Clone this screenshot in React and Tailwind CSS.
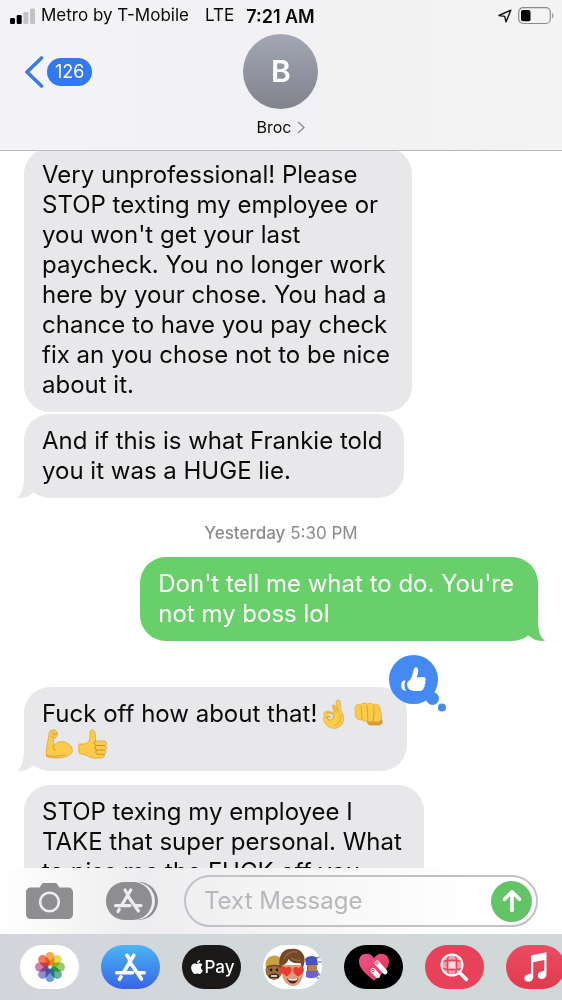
import { useState } from 'react';
import { FaApple } from 'react-icons/fa';

const CellSignal = () => (
  <svg width="25" height="16" viewBox="0 0 25 16" aria-hidden="true">
    <rect x="0" y="10" width="5" height="6" rx="1.3" fill="#000" />
    <rect x="6.700" y="7" width="5" height="9" rx="1.300" fill="#000" />
    <rect x="13.4" y="4" width="5" height="12" rx="1.3" fill="#c3c3c6" />
    <rect x="20" y="0.500" width="5" height="15.500" rx="1.3" fill="#c3c3c6" />
  </svg>
);

const LocationArrow = () => (
  <svg width="14" height="14" viewBox="0 0 14 14" aria-hidden="true">
    <path d="M12.800 1.200 1 6.500 6.700 7.400 8 12.900Z" fill="none" stroke="#111" strokeWidth="1.4" strokeLinejoin="round" />
  </svg>
);

const Battery = () => (
  <svg width="36" height="18" viewBox="0 0 36 18" aria-hidden="true">
    <rect x="0.700" y="0.700" width="31.6" height="15.800" rx="4.500" fill="none" stroke="#8b8b8e" strokeWidth="1.2" />
    <rect x="3" y="3" width="9.500" height="11.200" rx="2" fill="#000" />
    <path d="M34 6v5.500c1.800-.6 1.800-4.900 0-5.500Z" fill="#98989b" />
  </svg>
);

const OkHand = () => (
  <svg className="mx-0.5" width="30" height="30" viewBox="0 0 30 30" role="img" aria-label="OK hand">
    <path
      d="M18.200 1.300c1.700-1 3.200.4 3.200 2.200l.3 7.200c.6 2.600 2.700 4.500 2.900 7.700.4 6.600-4 11.200-9.700 10.900-5.400-.2-8.700-3.500-10.300-8.700-.6-2 .1-2.900 1.300-3.500-.9-1.200-1.500-2.500-.5-3.700 1.200-1.400 4.200-1.600 6.800-.5l3.300 1.800-2.100-6.500c-.7-2.300 1.500-3.500 2.600-1.600l2.600 4.900-1.400-6.900c-.2-1.500-.1-2.500 1-3.300Z"
      fill="#fbcb49" stroke="#d9a033" strokeWidth=".6"
    />
    <path d="M7.500 14c2.600-.6 5.800.3 7.100 2.400.6 1.900-1.300 4.500-3.600 4.800-1.900-.3-2.700-2-3.800-3.300 1.700.5 3.700.6 5-.4" fill="#e8e7ea" stroke="#c08a2c" strokeWidth=".8" />
    <path d="m14.700 7.500 2.500 6.300M18.200 8l1.300 5.500M21.500 16c1 4-1 9-5.500 10.500" fill="none" stroke="#dfa43a" strokeWidth=".8" strokeLinecap="round" />
  </svg>
);

const Fist = () => (
  <svg className="mx-0.5" width="30" height="30" viewBox="0 0 30 30" role="img" aria-label="Oncoming fist">
    <path d="M14 20h14.500c1.300 2.500.7 5.300-1.500 6H17c-2 0-3.200-2.600-3-6Z" fill="#dd9a35" stroke="#c2832e" strokeWidth=".6" />
    <path
      d="M2 8.500c.5-2.600 3.500-3.600 5.500-2.400 1.700-2.500 5-2.500 6.500-.9 1.800-1.500 5-1.400 6.400.4 2.400-1 5.600-.3 6.300 2.300l1.900 8.500c.7 3.600-.9 6-3.700 6.500-2 .6-4-.2-5-1.500-1.500 1.600-4.200 1.600-5.700.1-1.600 1.200-4 .9-5.200-.8-2.300.7-5-.3-6-2.500-.9-2.500-.9-6-1-9.700Z"
      fill="#fcca48" stroke="#dca036" strokeWidth=".6"
    />
    <path d="M8 7.500c1 3.800.2 8.500 1 12M14 7c1.300 4 .2 9.500.8 13M20.600 7.500c1.300 4 .1 9-.2 13" fill="none" stroke="#d7972f" strokeWidth=".9" strokeLinecap="round" />
  </svg>
);

const Biceps = () => (
  <svg className="mx-0.5" width="30" height="30" viewBox="0 0 30 30" role="img" aria-label="Flexed biceps">
    <path
      d="M6.500 1.500c2.300-1.100 5.500-.6 6.500 1.300.7 1.900.4 4.800-1.300 5.900-.9.7-1.900.4-2.500-.1.200 2.700.8 5.400.4 8.500 3-4.600 8.500-6 13.500-3.100 3.800 2.100 5.800 5.700 5.200 8.700-1.500 3.700-8 6.500-16 6.300-4.800-.1-8.800-.4-9.800-1.700-.9-5.500.9-12.300 1.900-18.300.5-3.500.9-6.600 2.100-7.500Z"
      fill="#fbcc4b" stroke="#d99c30" strokeWidth=".7"
    />
    <path d="M9.800 8.500 7.400 7M8 3.500l2.400 1.700M12.500 4.500 9.700 6M9.500 17.200c-1.300 2.500.5 4.300 2.500 4M3 26.500c5 1.300 12 1 18-.7" fill="none" stroke="#d6972d" strokeWidth=".9" strokeLinecap="round" />
  </svg>
);

const ThumbsUp = () => (
  <svg className="mx-0.5" width="30" height="30" viewBox="0 0 30 30" role="img" aria-label="Thumbs up">
    <path
      d="M11 12.200c1.500-3 .9-6.700 1.200-9.600.5-2.200 3.500-2.300 4.400-.1 1 2.700 1.300 6 .9 9.500l8.500-.1c3 .1 3.400 3.800 1.300 4.600 1.800 1 1.500 4-.1 4.700 1.200 1.200.7 3.700-1 4.200.6 2.300-1 3.700-3.200 3.700-6.500.4-10.500-.2-14-2.300-3-1.600-6.200-1.500-7.500-2.300-1.200-3.200-1-6.300-.4-9.600 3.300.4 7.500.4 9.900-2.700Z"
      fill="#fbcb4a" stroke="#d99c30" strokeWidth=".7"
    />
    <path d="M17.500 12.200c-1.700.7-1.500 3.700.3 4.300h9M18 16.700c-1.500 1-1.300 3.700.3 4.300h8.500M18.500 21.200c-1.200 1-.9 3.500.5 4h7" fill="none" stroke="#cb8c28" strokeWidth="1" strokeLinecap="round" />
  </svg>
);

const LikeReaction = () => (
  <svg className="absolute -top-8 -right-10" width="58" height="58" viewBox="0 0 58 58" role="img" aria-label="Liked">
    <circle cx="24.500" cy="24.500" r="24.500" fill="#448af2" />
    <circle cx="43.500" cy="43.500" r="6.500" fill="#448af2" />
    <circle cx="53" cy="52.500" r="4" fill="#448af2" />
    <path
      d="M19 26.500c3.500-2 4.300-6 5.700-11.500.6-3.300 3.800-3.500 4.400-.6.500 2.600-.5 5.200-1.400 8.100l6.200-.4c2.600-.1 3.600 2.400 2.200 4 .9 1.300.5 2.700-.5 3.400.6 1.400 0 2.600-1.100 3.200.1 1.700-1 2.800-2.900 3-4.800.7-9 .6-11.800-1.600-2-2-2.200-5.900-.8-7.600Z"
      fill="#fff"
    />
    <path d="M16.500 25.500c-2.500-.6-4.200 1.200-4.300 4.700 0 3.500 1.700 5.800 4.800 5.300-1.900-3.100-1.900-6.500-.5-10Z" fill="#fff" />
  </svg>
);

const StoreGlyph = ({ width, height }) => (
  <svg width={width} height={height} viewBox="0 0 31 28" aria-hidden="true">
    <path
      d="M18.800 2.300 8.500 19.500M6 23.800l-1.500 2.400M12 2.300l3.500 5.700M14.500 8.500 26.500 26M1.800 19.700H17.500M24 19.700h5.200"
      fill="none" stroke="#fff" strokeWidth="3.600" strokeLinecap="round"
    />
  </svg>
);

const CameraIcon = () => (
  <svg width="47" height="36" viewBox="0 0 47 36" aria-hidden="true">
    <path
      d="M5 4.500h8.500l2-3C16.300.4 17 0 18.500 0h10c1.500 0 2.200.4 3 1.500l2 3H42c3 0 5 2 5 5V31c0 3-2 5-5 5H5c-3 0-5-2-5-5V9.500c0-3 2-5 5-5Z"
      fill="#8e8e90"
    />
    <circle cx="23.500" cy="19" r="9.300" fill="none" stroke="#ededef" strokeWidth="2.600" />
  </svg>
);

const AppDrawerIcon = () => (
  <svg width="52" height="38" viewBox="0 0 52 38" aria-hidden="true">
    <rect width="52" height="38" rx="19" fill="#8e8e90" />
    <rect width="49" height="38" rx="19" fill="#ededef" />
    <rect width="46" height="38" rx="19" fill="#8e8e90" />
    <path
      d="M24.800 8 15.500 23.500M13.300 27.300l-1.300 2.200M19 8l3 5M21.500 13.500 32.500 29M9.500 23.600H24M30 23.600h5"
      fill="none" stroke="#ededef" strokeWidth="3.200" strokeLinecap="round"
    />
  </svg>
);

const petals = ['#f7a13c', '#e3d63c', '#8cc65a', '#4fae8b', '#5f93d2', '#8f7fc6', '#c571a8', '#ee6a50'];

const PhotosGlyph = () => (
  <svg width="32" height="32" viewBox="-16 -16 32 32" aria-hidden="true">
    {petals.map((color, i) => (
      <rect
        key={color}
        x="-4.500" y="-15" width="9" height="13.500" rx="4.500"
        fill={color} fillOpacity=".9"
        transform={`rotate(${i * 45})`}
        style={{ mixBlendMode: 'multiply' }}
      />
    ))}
  </svg>
);

const MemojiGlyph = () => (
  <svg width="59" height="44" viewBox="0 0 59 44" aria-hidden="true">
    <path d="M44 12h10v20H44z" fill="#5462bd" />
    <path d="M42 14c3-4 11-4 12 0l1 6H43Z" fill="#4654b3" />
    <path d="M45 20h9v6h-9z" fill="#b9803f" />
    <path d="M43 26c5 2 9 1 12-1l1 5c-4 4-9 4-13 2Z" fill="#6d63cf" />
    <path d="M54 13l3-1M55 17h3M55 28l3 3M54 32l2 2" stroke="#7e88df" strokeWidth="1.500" strokeLinecap="round" />
    <ellipse cx="11" cy="25" rx="8.500" ry="10" fill="#a06b3c" />
    <path d="M2.500 22c-.5-8 4-11.500 9-11.500S20 14 20 22c-5-3-12-3-17.500 0Z" fill="#c9a043" />
    <path d="M4 22c4-2 10-2 14 0" fill="none" stroke="#6b4a20" strokeWidth="1.500" />
    <circle cx="8" cy="25" r="1.400" fill="#2b1a10" />
    <circle cx="14" cy="25" r="1.400" fill="#2b1a10" />
    <path d="M6 30c3-2 7-2 10 0v3H6Z" fill="#4a2a18" />
    <path d="M8 31h6" stroke="#fff" strokeWidth="1.500" />
    <path d="M19 20h21v8c0 7-4.500 13-10 13s-11-6-11-13Z" fill="#dc9d79" />
    <path d="M17 24C14 11 20 3.500 28 4c8-2 15 5 13.500 13l-2 8-2-7c-6 1-10-1-12-4-1 4-4 6-6 6Z" fill="#75482c" />
    <path d="M21 14c3-6 8-8 13-7M28 13c3 2 7 3 10 2" fill="none" stroke="#9a6641" strokeWidth="1.300" />
    <path d="M24 31.500c-4-2.500-7.500-5-6.500-8.500 1-2.500 4.500-2 5.500 0 1.500-2 5-1.500 5.500 1 .3 3-2 5.500-4.500 7.500ZM35 31.500c-3-2-5.500-4.500-4.700-7.500.8-2.500 4.200-2.500 5-.5 1.500-2.500 5.500-2 5.700 1 0 3-3 5.500-6 7Z" fill="#ee3832" />
    <path d="M24 33.500c4 1.500 8 1.500 11.500 0-1 3.500-3.500 5-5.700 5s-4.800-1.500-5.800-5Z" fill="#5d1818" />
    <path d="M25.500 34.300c3 .8 6 .8 8.700 0" stroke="#fff" strokeWidth="1.500" />
  </svg>
);

const TouchGlyph = () => (
  <svg width="32" height="28" viewBox="0 0 32 28" aria-hidden="true">
    <defs>
      <linearGradient id="heart" x1="0" y1="0" x2="1" y2="1">
        <stop offset="0" stopColor="#e9568f" />
        <stop offset="1" stopColor="#e5344e" />
      </linearGradient>
    </defs>
    <path d="M16 27.500C9 22 1 16 1 8.500 1 3.500 4.500.8 8.500.8c3.500 0 6 1.900 7.500 4.500C17.500 2.700 20 .8 23.500.8c4 0 7.500 2.700 7.500 7.700 0 7.500-8 13.500-15 19Z" fill="url(#heart)" />
    <g fill="#fff">
      <rect x="12.500" y="15" width="5" height="12" rx="2.500" transform="rotate(-42 15 17.500)" />
      <rect x="16.500" y="7.500" width="5" height="17" rx="2.500" transform="rotate(-42 19 10)" />
    </g>
    <g fill="none" stroke="#e5446b" strokeWidth="1">
      <circle cx="15" cy="17.500" r="1.300" />
      <circle cx="19" cy="10" r="1.300" />
    </g>
  </svg>
);

const ImagesGlyph = () => (
  <svg width="29" height="29" viewBox="0 0 29 29" aria-hidden="true">
    <circle cx="12" cy="12" r="10.800" fill="#f2a0ac" />
    <path d="M9 9h6v6H9z" fill="#fbdde1" />
    <g fill="none" stroke="#e8425b" strokeWidth="1.300">
      <path d="M2 8.500c6-1.500 14-1.500 20 0M2 15.500c6 1.500 14 1.500 20 0M8.500 2c-1.500 6-1.500 14 0 20M15.500 2c1.500 6 1.500 14 0 20" />
    </g>
    <circle cx="12" cy="12" r="10.500" fill="none" stroke="#fff" strokeWidth="2" />
    <path d="m20 20 6.500 6.500" stroke="#fff" strokeWidth="3.400" strokeLinecap="round" />
  </svg>
);

const MusicGlyph = () => (
  <svg width="25" height="30" viewBox="0 0 25 30" aria-hidden="true">
    <path d="M8 3.500 23.500.3V22c0 3.200-1.800 5-4.800 5-2.400 0-3.900-1.400-3.900-3.500 0-2.500 2-3.800 4.300-4.200 1.700-.3 2.200-.7 2.200-2V8L10.200 10.200V25c0 3-2 4.800-5 4.800-2.300 0-3.900-1.500-3.900-3.500 0-2.500 2-3.700 4.300-4.100 1.800-.3 2.400-.7 2.400-2Z" fill="#fff" />
  </svg>
);

const ApplePayGlyph = () => (
  <span className="flex items-center text-white">
    <FaApple size={16} />
    <span className="text-[17px] font-medium leading-5">Pay</span>
  </span>
);

const apps = [
  { name: 'Photos', style: 'bg-white', icon: <PhotosGlyph /> },
  { name: 'App Store', style: 'bg-linear-to-b from-[#4bb5f2] to-[#3b63e6]', icon: <StoreGlyph width={31} height={28} /> },
  { name: 'Apple Pay', style: 'bg-[#1a1917]', icon: <ApplePayGlyph /> },
  { name: 'Memoji', style: 'bg-white', icon: <MemojiGlyph /> },
  { name: 'Digital Touch', style: 'bg-black', icon: <TouchGlyph /> },
  { name: 'Images', style: 'bg-[#e8425b]', icon: <ImagesGlyph /> },
  { name: 'Music', style: 'bg-linear-to-b from-[#ea4c64] to-[#e03a4c]', icon: <MusicGlyph /> },
];

const Tail = ({ sent }) => (
  <svg
    className={sent ? 'absolute bottom-0 -right-[7px] -scale-x-100' : 'absolute bottom-0 -left-[7px]'}
    width="24" height="26" viewBox="0 0 24 26" aria-hidden="true"
  >
    <path d="M7 0C7 15 6 21 0 25.600 6.500 27 13 24 17 20L24 12V0Z" fill={sent ? '#69cf6b' : '#e8e8eb'} />
  </svg>
);

const Bubble = ({ lines, sent, tail, children, className = '' }) => (
  <div
    className={`relative w-fit rounded-[26px] py-3 pl-[18px] text-[24px] leading-[30px] whitespace-nowrap ${
      sent ? 'self-end bg-[#69cf6b] pr-6 text-white' : 'bg-[#e8e8eb] pr-[22px] text-[#0a0a0a]'
    } ${className}`}
  >
    {tail && <Tail sent={sent} />}
    {lines.map((line, i) => (
      <p key={i} className="relative flex h-[30px] items-center">{line}</p>
    ))}
    {children}
  </div>
);

const Header = () => (
  <header className="shrink-0 border-b border-[#b9b9bc] bg-linear-to-r from-[#f4f4f6] via-[#f1f1f3] to-[#f4f4f5]">
    <div className="flex h-[34px] items-center justify-between pl-[10px] pr-2 pb-0.5 text-[17px] text-[#0a0a0a]">
      <div className="flex items-center">
        <CellSignal />
        <span className="ml-1.5">Metro by T-Mobile</span>
        <span className="ml-4">LTE</span>
        <span className="ml-3 text-[18px] font-semibold">7:21 AM</span>
      </div>
      <div className="flex items-center gap-1.5">
        <LocationArrow />
        <Battery />
      </div>
    </div>
    <div className="grid grid-cols-3 px-6 pb-[9px]">
      <button className="flex h-[75px] items-center gap-[3px] justify-self-start" aria-label="Back, 126 unread">
        <svg width="20" height="32" viewBox="0 0 20 32" aria-hidden="true">
          <path d="M17.500 2 3 16l14.500 14" fill="none" stroke="#3b7ae8" strokeWidth="3.600" strokeLinecap="round" strokeLinejoin="round" />
        </svg>
        <span className="flex h-7 items-center rounded-full bg-[#3478f0] px-2 text-[18px] text-white">126</span>
      </button>
      <button className="flex flex-col items-center justify-self-center">
        <span className="flex size-[75px] items-center justify-center rounded-full bg-linear-to-b from-[#a3a7b5] to-[#81838d] text-[30px] font-semibold text-white">
          B
        </span>
        <span className="mt-1 flex h-7 items-center gap-1.5 text-[16px] text-[#0a0a0a]">
          Broc
          <svg width="8" height="13" viewBox="0 0 8 13" aria-hidden="true">
            <path d="m1 1 6 5.500L1 12" fill="none" stroke="#8c8c8f" strokeWidth="1.300" />
          </svg>
        </span>
      </button>
    </div>
  </header>
);

const Composer = () => {
  const [text, setText] = useState('');

  return (
    <form
      className="flex shrink-0 items-center bg-linear-to-r from-white via-[#ededef] via-25% to-white to-85% py-[7px] pl-[26px] pr-6"
      onSubmit={(e) => e.preventDefault()}
    >
      <button type="button" aria-label="Camera"><CameraIcon /></button>
      <button type="button" aria-label="Apps" className="ml-[33px]"><AppDrawerIcon /></button>
      <div className="ml-[26px] flex h-[52px] min-w-0 flex-1 items-center rounded-full border-2 border-[#c3c1c6] pl-[18px] pr-1">
        <input
          type="text"
          aria-label="Text Message"
          placeholder="Text Message"
          value={text}
          onChange={(e) => setText(e.target.value)}
          className="min-w-0 flex-1 bg-transparent text-[24px] leading-[30px] text-black outline-none placeholder:text-[#b8b8bc]"
        />
        <button type="submit" aria-label="Send" className="flex size-[41px] shrink-0 items-center justify-center rounded-full bg-[#62c466]">
          <svg width="20" height="24" viewBox="0 0 20 24" aria-hidden="true">
            <path d="M10 21.500V3M2.500 10.300 10 2.800l7.500 7.500" fill="none" stroke="#fff" strokeWidth="3.600" strokeLinecap="round" strokeLinejoin="round" />
          </svg>
        </button>
      </div>
    </form>
  );
};

const App = () => (
  <div className="flex h-dvh flex-col overflow-hidden bg-white font-['Inter','Liberation_Sans',sans-serif]">
    <Header />
    <main className="min-h-0 flex-1 overflow-hidden">
      <div className="-mt-[3px] flex flex-col px-6">
        <Bubble
          lines={[
            'Very unprofessional! Please',
            'STOP texting my employee or',
            "you won't get your last",
            'paycheck. You no longer work',
            'here by your chose. You had a',
            'chance to have you pay check',
            'fix an you chose not to be nice',
            'about it.',
          ]}
        />
        <Bubble tail className="mt-0.5" lines={['And if this is what Frankie told', 'you it was a HUGE lie.']} />
        <p className="pt-[23px] pb-3 text-center text-[17px] leading-6 text-[#8b8b8f]">
          <span className="font-medium">Yesterday</span> 5:30 PM
        </p>
        <Bubble sent tail lines={["Don't tell me what to do. You're", 'not my boss lol']} />
        <Bubble
          tail
          className="mt-[46px]"
          lines={[
            <>Fuck off how about that!<OkHand /><Fist /></>,
            <><Biceps /><ThumbsUp /></>,
          ]}
        >
          <LikeReaction />
        </Bubble>
        <Bubble
          className="mt-[14px]"
          lines={['STOP texing my employee I', 'TAKE that super personal. What', 'to piss me the FUCK off you']}
        />
      </div>
    </main>
    <footer className="shrink-0">
      <Composer />
      <nav
        aria-label="iMessage apps"
        className="flex h-[66px] items-center gap-[22px] overflow-hidden bg-linear-to-r from-[#d4d5dc] via-[#d0d8d9] to-[#d2d8d8] pl-5"
      >
        {apps.map((app) => (
          <button
            key={app.name}
            aria-label={app.name}
            className={`flex h-11 w-[59px] shrink-0 items-center justify-center overflow-hidden rounded-full ${app.style}`}
          >
            {app.icon}
          </button>
        ))}
      </nav>
    </footer>
  </div>
);

export default App;
